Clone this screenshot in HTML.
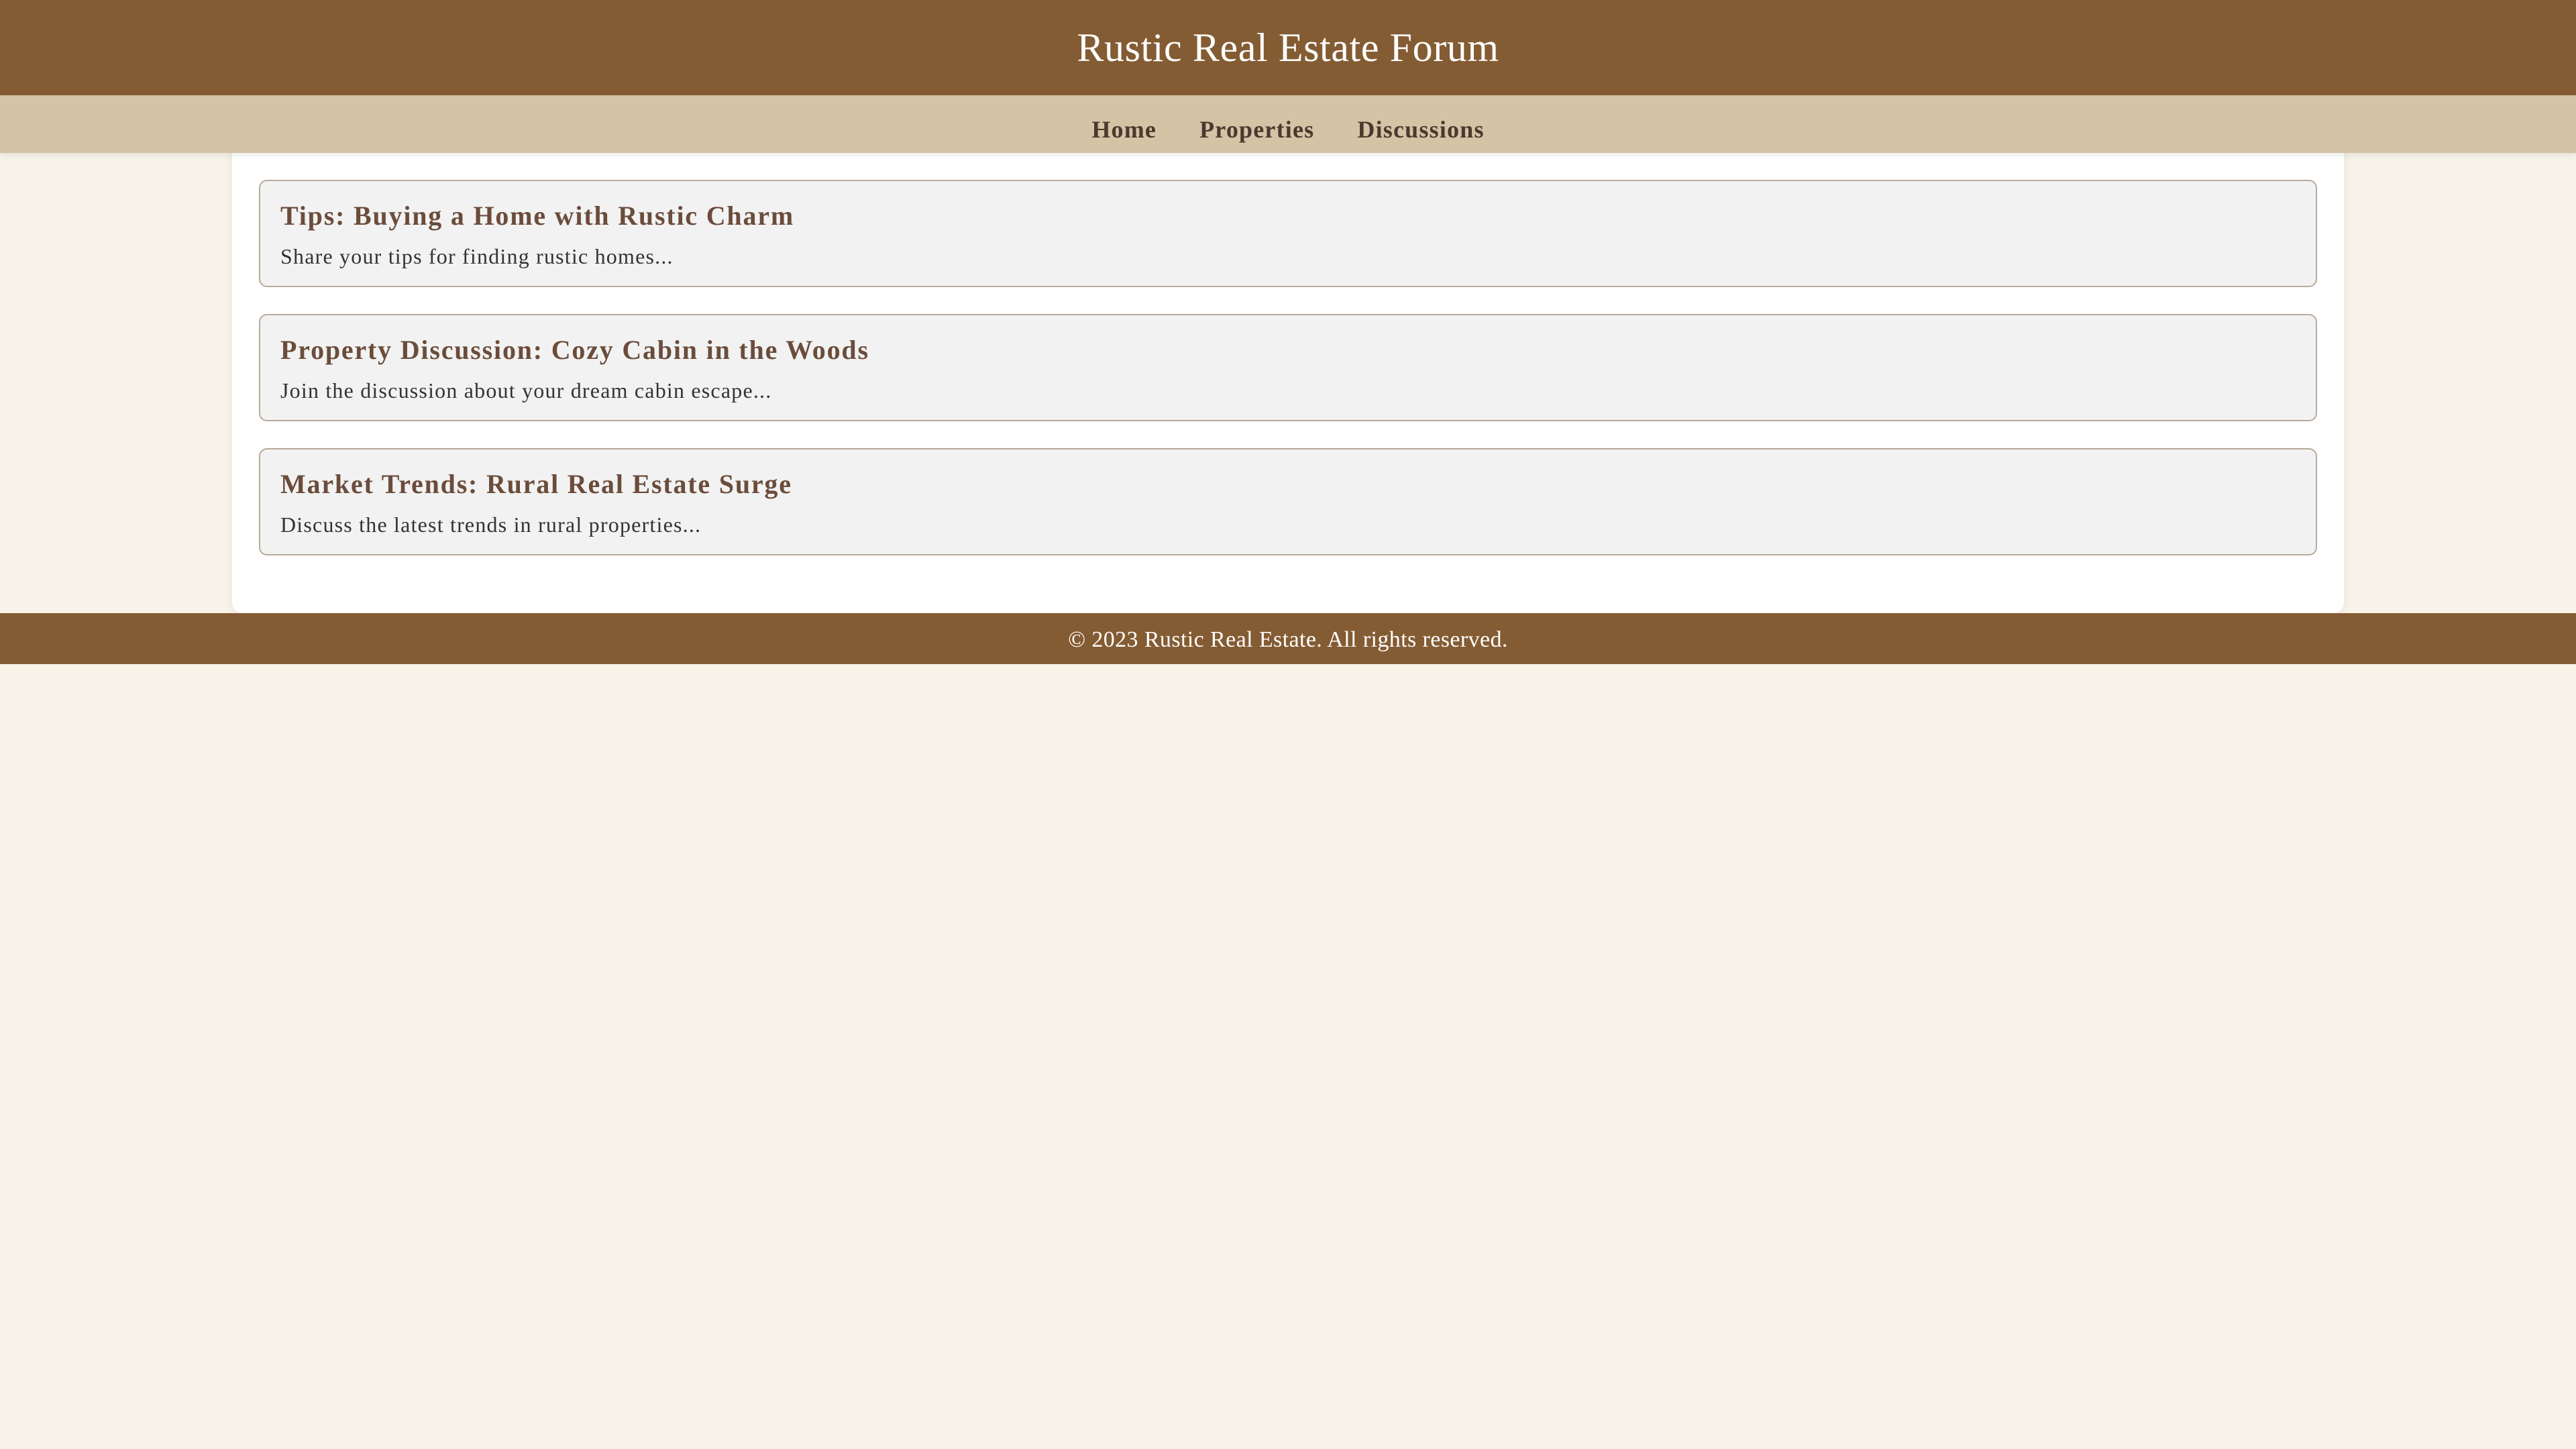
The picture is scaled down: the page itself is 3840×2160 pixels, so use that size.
<!DOCTYPE html>
<html><head><meta charset="utf-8"><style>
html,body{margin:0;padding:0}
body{zoom:2;background:#f8f4e9;font-family:"Liberation Serif",serif;width:1920px;height:1080px;overflow:hidden}
header{background:#845c33;height:71px;color:#fff;text-align:center}
header h1{margin:0;font-weight:normal;font-size:30px;line-height:71px;letter-spacing:0.3px}
nav{background:#d4c3a5;height:43px;text-align:center;box-shadow:0 2px 4px rgba(0,0,0,.08);position:relative;z-index:1}
nav a{display:inline-block;font-weight:bold;font-size:18px;color:#4a3a2e;line-height:43px;padding-top:4px;margin:0 16px;text-decoration:none;letter-spacing:0.6px}
.main{position:absolute;left:173px;width:1534px;top:114px;height:303px;background:#fff;border-radius:0 0 8px 8px;padding:20px;box-shadow:0 0 8px rgba(0,0,0,.08)}
.card{background:#f2f2f2;border:1px solid #b8aa9c;border-radius:6px;margin-bottom:20px;padding:0 15px;box-sizing:border-box;height:80px}
.card h2{margin:0;padding-top:14px;font-size:20px;color:#6b4c3b;line-height:24px;letter-spacing:0.9px}
.card p{margin:8px 0 0;font-size:16px;color:#333;line-height:20px;letter-spacing:0.6px}
footer{position:absolute;top:457px;left:0;width:1920px;height:38px;background:#845c33;color:#fff;text-align:center;font-size:17px;line-height:38px;letter-spacing:0.2px;padding-top:1px;box-sizing:border-box}
</style></head><body>
<header><h1>Rustic Real Estate Forum</h1></header>
<nav><a>Home</a><a>Properties</a><a>Discussions</a></nav>
<div class="main">
<div class="card"><h2>Tips: Buying a Home with Rustic Charm</h2><p>Share your tips for finding rustic homes...</p></div>
<div class="card"><h2>Property Discussion: Cozy Cabin in the Woods</h2><p>Join the discussion about your dream cabin escape...</p></div>
<div class="card"><h2>Market Trends: Rural Real Estate Surge</h2><p>Discuss the latest trends in rural properties...</p></div>
</div>
<footer>© 2023 Rustic Real Estate. All rights reserved.</footer>
</body></html>
